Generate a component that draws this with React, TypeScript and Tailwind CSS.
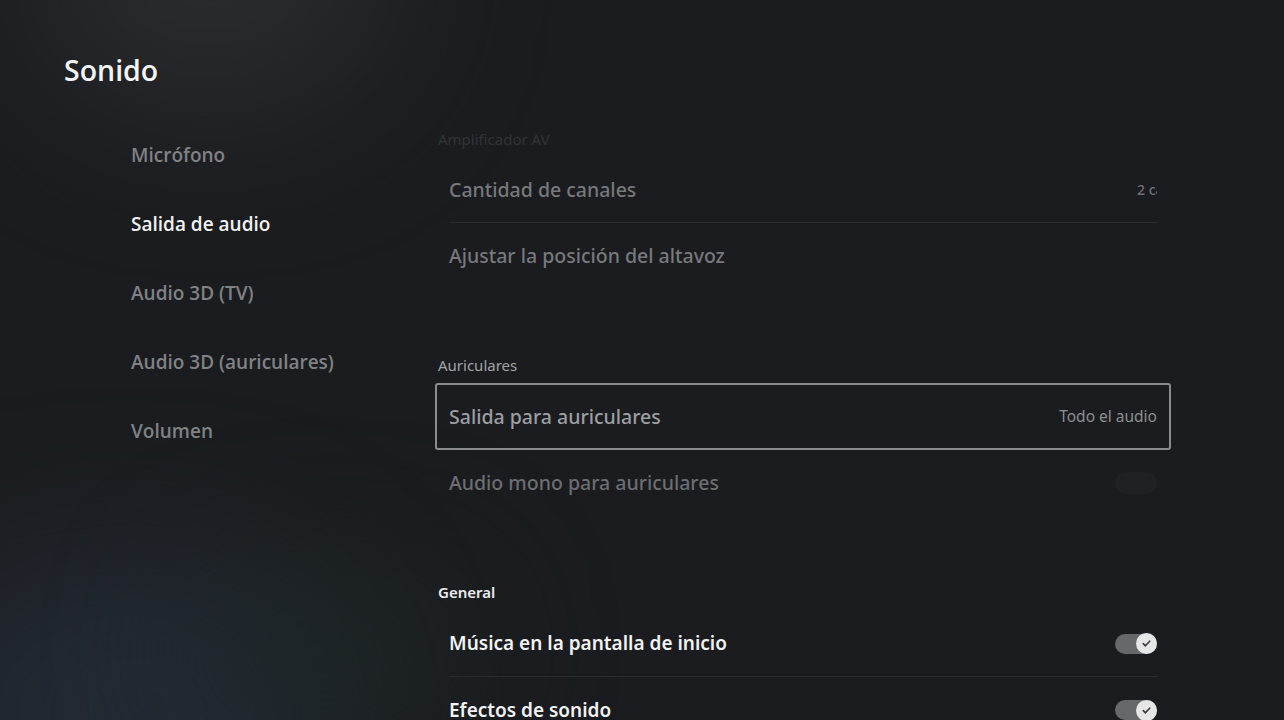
import React from 'react';

const navItems = [
  { label: 'Micrófono', active: false },
  { label: 'Salida de audio', active: true },
  { label: 'Audio 3D (TV)', active: false },
  { label: 'Audio 3D (auriculares)', active: false },
  { label: 'Volumen', active: false },
];

const Toggle: React.FC<{ faded?: boolean }> = ({ faded }) => {
  if (faded) {
    return <div className="w-[42px] h-[22px] rounded-full bg-[#1f2124]" />;
  }
  return (
    <div className="w-[42px] h-[20px] rounded-full bg-[#66686b] flex items-center justify-end">
      <div className="w-[21px] h-[21px] rounded-full bg-[#e6e6e7] flex items-center justify-center">
        <svg className="w-[11px] h-[11px]" viewBox="0 0 12 12" fill="none" stroke="#3a3c40" strokeWidth={1.8} strokeLinecap="round" strokeLinejoin="round">
          <path d="M2.5 6.2l2.3 2.3 4.7-5" />
        </svg>
      </div>
    </div>
  );
};

const SectionHeader: React.FC<{ label: string; className?: string }> = ({ label, className }) => (
  <div className={`pl-[3px] flex items-center text-[15px] ${className ?? ''}`}>{label}</div>
);

const App: React.FC = () => {
  return (
    <div
      className="relative w-full h-[720px] overflow-hidden bg-[#1a1c1f] text-white"
      style={{ fontFamily: '"Open Sans", "Noto Sans", sans-serif' }}
    >
      {/* background glows */}
      <div className="pointer-events-none absolute -top-[170px] left-[30px] w-[360px] h-[280px] rounded-full bg-[#35373b] opacity-60 blur-[80px]" />
      <div className="pointer-events-none absolute top-[560px] -left-[80px] w-[420px] h-[300px] rounded-full bg-[#28313d] opacity-70 blur-[80px]" />
      <div className="pointer-events-none absolute top-[570px] left-[180px] w-[300px] h-[160px] rounded-full bg-[#1e2828] opacity-60 blur-[70px]" />

      <div className="relative flex flex-col">
        <h1 className="pl-[64px] pt-[51px] h-[121px] text-[28.5px] leading-[38px] font-semibold text-[#f4f4f4]">
          Sonido
        </h1>

        <div className="flex">
          <nav className="w-[435px] pl-[131px] flex flex-col">
            {navItems.map((item) => (
              <div
                key={item.label}
                className={`h-[69px] flex items-center text-[19px] font-semibold ${
                  item.active ? 'text-[#f2f2f2]' : 'text-[#808285]'
                }`}
              >
                {item.label}
              </div>
            ))}
          </nav>

          <main className="w-[736px] flex flex-col" style={{ fontFamily: '"Noto Sans", "Open Sans", sans-serif' }}>
            <SectionHeader label="Amplificador AV" className="h-[36px] text-[#323438]" />
            <div className="h-[66px] mx-[14px] flex items-center justify-between border-b border-[#2a2c30] text-[19.5px] font-medium text-[#77797c]">
              <span>Cantidad de canales</span>
              <span className="text-[14px] text-[#6f7174] w-[20px] overflow-hidden whitespace-nowrap">2 canales</span>
            </div>
            <div className="h-[66px] mx-[14px] flex items-center text-[19.5px] font-medium text-[#77797c]">
              <span>Ajustar la posición del altavoz</span>
            </div>

            <SectionHeader label="Auriculares" className="mt-[58px] h-[36px] text-[#a2a4a7]" />
            <div className="h-[67px] rounded-[3px] border-2 border-[#8a8c8f] px-[12px] flex items-center justify-between">
              <span className="text-[19.5px] font-medium text-[#9d9fa2]">Salida para auriculares</span>
              <span className="text-[15.5px] text-[#8d8f92]">Todo el audio</span>
            </div>
            <div className="h-[66px] mx-[14px] flex items-center justify-between text-[19.5px] font-medium text-[#6c6e71]">
              <span>Audio mono para auriculares</span>
              <Toggle faded />
            </div>

            <SectionHeader label="General" className="mt-[57px] h-[38px] font-semibold text-[#ececec]" />
            <div className="h-[66px] mx-[14px] flex items-center justify-between border-b border-[#2a2c30]">
              <span className="text-[19px] font-semibold text-[#f2f2f2]">Música en la pantalla de inicio</span>
              <Toggle />
            </div>
            <div className="h-[66px] mx-[14px] flex items-center justify-between">
              <span className="text-[19px] font-semibold text-[#f2f2f2]">Efectos de sonido</span>
              <Toggle />
            </div>
          </main>
        </div>
      </div>
    </div>
  );
};

export default App;
